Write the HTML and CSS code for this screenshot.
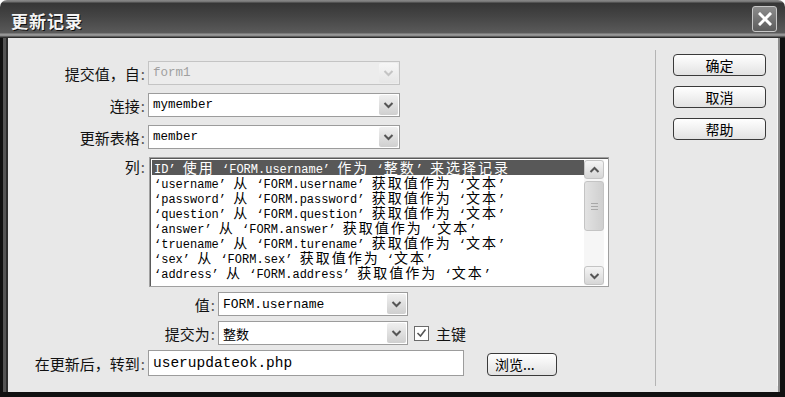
FILE: index.html
```html
<!DOCTYPE html>
<html lang="zh-CN">
<head>
    <meta charset="UTF-8">
    <title>更新记录</title>
    <link rel="stylesheet" href="styles.css">
</head>
<body>
<div class="window">
    <div class="titlebar">
        <span class="title">更新记录</span>
        <div class="close">
            <svg width="14" height="14" viewBox="0 0 14 14"><path d="M2 2 L12 12 M12 2 L2 12" stroke="#fff" stroke-width="3" stroke-linecap="square"/></svg>
        </div>
    </div>
    <div class="frame">
        <div class="content">
            <div class="main">
                <div class="row">
                    <label class="lbl">提交值，自<i>:</i></label>
                    <div class="select disabled">
                        <span class="val">form1</span>
                        <span class="arrow"><svg width="11" height="8" viewBox="0 0 11 8"><path d="M1.5 2 L5.5 6 L9.5 2" fill="none" stroke="#c4c4c4" stroke-width="2"/></svg></span>
                    </div>
                </div>
                <div class="row">
                    <label class="lbl">连接<i>:</i></label>
                    <div class="select">
                        <span class="val">mymember</span>
                        <span class="arrow"><svg width="11" height="8" viewBox="0 0 11 8"><path d="M1.5 2 L5.5 6 L9.5 2" fill="none" stroke="#555" stroke-width="2"/></svg></span>
                    </div>
                </div>
                <div class="row">
                    <label class="lbl">更新表格<i>:</i></label>
                    <div class="select">
                        <span class="val">member</span>
                        <span class="arrow"><svg width="11" height="8" viewBox="0 0 11 8"><path d="M1.5 2 L5.5 6 L9.5 2" fill="none" stroke="#555" stroke-width="2"/></svg></span>
                    </div>
                </div>
                <div class="row top">
                    <label class="lbl">列<i>:</i></label>
                    <div class="list">
                        <div class="items">
                            <div class="item selected">ID’ <span class="zh">使用</span> ‘FORM.username’ <span class="zh">作为</span> ‘<span class="zh">整数</span>’ <span class="zh">来选择记录</span></div>
                            <div class="item">‘username’ <span class="zh">从</span> ‘FORM.username’ <span class="zh">获取值作为</span> ‘<span class="zh">文本</span>’</div>
                            <div class="item">‘password’ <span class="zh">从</span> ‘FORM.password’ <span class="zh">获取值作为</span> ‘<span class="zh">文本</span>’</div>
                            <div class="item">‘question’ <span class="zh">从</span> ‘FORM.question’ <span class="zh">获取值作为</span> ‘<span class="zh">文本</span>’</div>
                            <div class="item">‘answer’ <span class="zh">从</span> ‘FORM.answer’ <span class="zh">获取值作为</span> ‘<span class="zh">文本</span>’</div>
                            <div class="item">‘truename’ <span class="zh">从</span> ‘FORM.turename’ <span class="zh">获取值作为</span> ‘<span class="zh">文本</span>’</div>
                            <div class="item">‘sex’ <span class="zh">从</span> ‘FORM.sex’ <span class="zh">获取值作为</span> ‘<span class="zh">文本</span>’</div>
                            <div class="item">‘address’ <span class="zh">从</span> ‘FORM.address’ <span class="zh">获取值作为</span> ‘<span class="zh">文本</span>’</div>
                        </div>
                        <div class="scroll">
                            <div class="sbtn"><svg width="11" height="8" viewBox="0 0 11 8"><path d="M1.5 6 L5.5 2 L9.5 6" fill="none" stroke="#555" stroke-width="2"/></svg></div>
                            <div class="thumb"><span></span><span></span><span></span></div>
                            <div class="track"></div>
                            <div class="sbtn"><svg width="11" height="8" viewBox="0 0 11 8"><path d="M1.5 2 L5.5 6 L9.5 2" fill="none" stroke="#555" stroke-width="2"/></svg></div>
                        </div>
                    </div>
                </div>
                <div class="row sub">
                    <label class="lbl">值<i>:</i></label>
                    <div class="select short">
                        <span class="val">FORM.username</span>
                        <span class="arrow"><svg width="11" height="8" viewBox="0 0 11 8"><path d="M1.5 2 L5.5 6 L9.5 2" fill="none" stroke="#555" stroke-width="2"/></svg></span>
                    </div>
                </div>
                <div class="row sub">
                    <label class="lbl">提交为<i>:</i></label>
                    <div class="select short">
                        <span class="val zhval">整数</span>
                        <span class="arrow"><svg width="11" height="8" viewBox="0 0 11 8"><path d="M1.5 2 L5.5 6 L9.5 2" fill="none" stroke="#555" stroke-width="2"/></svg></span>
                    </div>
                    <span class="check"><svg width="11" height="10" viewBox="0 0 11 10"><path d="M1.5 5 L4.5 8 L9.5 1.5" fill="none" stroke="#555" stroke-width="1.6"/></svg></span>
                    <span class="check-label">主键</span>
                </div>
                <div class="row goto">
                    <label class="lbl">在更新后，转到<i>:</i></label>
                    <div class="input">userupdateok.php</div>
                    <div class="btn browse">浏览...</div>
                </div>
            </div>
            <div class="side">
                <div class="btn">确定</div>
                <div class="btn">取消</div>
                <div class="btn">帮助</div>
            </div>
        </div>
    </div>
</div>
</body>
</html>
```

FILE: styles.css
```css
body {
    margin: 0;
    background: #fff;
    font-family: "Noto Sans CJK SC", sans-serif;
    color: #111;
}
.window {
    width: 785px;
    height: 397px;
    display: flex;
    flex-direction: column;
}
.titlebar {
    height: 38px;
    box-sizing: border-box;
    border-radius: 7px 7px 0 0;
    background: linear-gradient(to bottom, #8a8a8a 0, #707070 2px, #363636 3px, #444 16px, #5a5a5a 33px, #9a9a9a 34px, #8a8a8a 36px, #2e2e2e 37px);
    display: flex;
    align-items: center;
    justify-content: space-between;
    padding: 2px 8px 0 11px;
}
.title {
    color: #f4f4f4;
    font-size: 17px;
    font-weight: bold;
    letter-spacing: 1px;
    text-shadow: 1px 1px 0 #111;
}
.close {
    width: 25px;
    height: 26px;
    box-sizing: border-box;
    margin-top: -2px;
    border: 1px solid #c8c8c8;
    border-radius: 3px;
    background: linear-gradient(to bottom, #8c8c8c, #5c5c5c);
    display: flex;
    align-items: center;
    justify-content: center;
}
.frame {
    flex: 1;
    display: flex;
    background: #111;
    padding: 0 7px 5px 8px;
}
.content {
    flex: 1;
    display: flex;
    background: #e8e8e8;
    box-shadow: -2px 0 0 #2e2e2e, -5px 0 0 #555, 2px 0 0 #8a8a8a;
}
.main {
    width: 647px;
    padding-top: 23px;
}
.row {
    display: flex;
    align-items: center;
    height: 24px;
    margin-bottom: 8px;
}
.row.top {
    align-items: flex-start;
    height: 130px;
    margin-bottom: 5px;
}
.row.sub {
    margin-bottom: 5px;
}
.row.goto {
    height: 26px;
}
.lbl {
    width: 137px;
    margin-right: 3px;
    text-align: right;
    font-size: 15px;
    white-space: nowrap;
}
.lbl i {
    font-style: normal;
    color: #555;
    margin-left: 1px;
}
.row.top .lbl {
    line-height: 18px;
    margin-top: 1px;
}
.row.sub .lbl {
    width: 207px;
}
.select {
    width: 252px;
    height: 24px;
    box-sizing: border-box;
    border: 1px solid #9c9c9c;
    background: #fff;
    display: flex;
    align-items: center;
}
.select.short {
    width: 190px;
}
.select.disabled {
    border-color: #c4c4c4;
    background: #ececec;
}
.val {
    flex: 1;
    padding-left: 4px;
    font-family: "Liberation Mono", monospace;
    font-size: 12.5px;
    color: #000;
}
.select.short .val {
    font-size: 13px;
}
.select.disabled .val {
    color: #a0a0a0;
}
.val.zhval {
    font-family: "Noto Sans CJK SC", sans-serif;
    font-size: 15px;
}
.arrow {
    width: 19px;
    height: 20px;
    margin-right: 1px;
    border-radius: 2px;
    background: linear-gradient(to bottom, #f0f0f0, #cfcfcf);
    display: flex;
    align-items: center;
    justify-content: center;
}
.select.disabled .arrow {
    background: linear-gradient(to bottom, #f6f6f6, #e6e6e6);
}
.list {
    width: 460px;
    height: 130px;
    box-sizing: border-box;
    margin-left: 1px;
    border: 1px solid #a0a0a0;
    box-shadow: inset 1px 1px 0 #5a5a5a;
    background: #fff;
    display: flex;
    padding: 2px 4px 1px 2px;
}
.items {
    flex: 1;
    overflow: hidden;
}
.item {
    height: 15px;
    line-height: 15px;
    padding-left: 2px;
    white-space: nowrap;
    font-family: "Liberation Mono", monospace;
    font-size: 12px;
    color: #000;
}
.item.selected {
    background: #585858;
    color: #fff;
}
.zh {
    font-family: "Noto Sans CJK SC", sans-serif;
    font-size: 14px;
    line-height: 15px;
    letter-spacing: 2px;
}
.scroll {
    width: 20px;
    display: flex;
    flex-direction: column;
    background: #f6f6f6;
}
.sbtn {
    height: 19px;
    box-sizing: border-box;
    border: 1px solid #c4c4c4;
    border-radius: 3px;
    background: linear-gradient(to bottom, #f4f4f4, #d6d6d6);
    display: flex;
    align-items: center;
    justify-content: center;
}
.thumb {
    height: 50px;
    margin-top: 2px;
    box-sizing: border-box;
    border: 1px solid #c4c4c4;
    border-radius: 3px;
    background: linear-gradient(to right, #e2e2e2, #cfcfcf);
    display: flex;
    flex-direction: column;
    align-items: center;
    justify-content: center;
    gap: 2px;
}
.thumb span {
    width: 7px;
    height: 1px;
    background: #a8a8a8;
}
.track {
    flex: 1;
}
.check {
    width: 15px;
    height: 15px;
    box-sizing: border-box;
    margin-left: 6px;
    border: 1px solid #6a6a6a;
    background: #fff;
    display: flex;
    align-items: center;
    justify-content: center;
}
.check-label {
    margin-left: 7px;
    font-size: 15px;
}
.input {
    width: 316px;
    height: 26px;
    box-sizing: border-box;
    border: 1px solid #9c9c9c;
    background: #fff;
    padding-left: 4px;
    font-family: "Liberation Mono", monospace;
    font-size: 14.5px;
    line-height: 24px;
    color: #000;
}
.btn {
    width: 93px;
    height: 22px;
    box-sizing: border-box;
    border: 1px solid #3a3a3a;
    border-radius: 4px;
    background: linear-gradient(to bottom, #fff, #e2e2e2);
    display: flex;
    align-items: center;
    justify-content: center;
    font-size: 14px;
    color: #000;
    margin-bottom: 10px;
}
.btn.browse {
    width: 70px;
    height: 23px;
    margin: 2px 0 0 23px;
    justify-content: flex-start;
    padding-left: 7px;
}
.side {
    flex: 1;
    margin: 12px 0 6px;
    border-left: 1px solid #b4b4b4;
    box-shadow: -1px 0 0 #f6f6f6 inset;
    padding: 4px 0 0 17px;
}
```
